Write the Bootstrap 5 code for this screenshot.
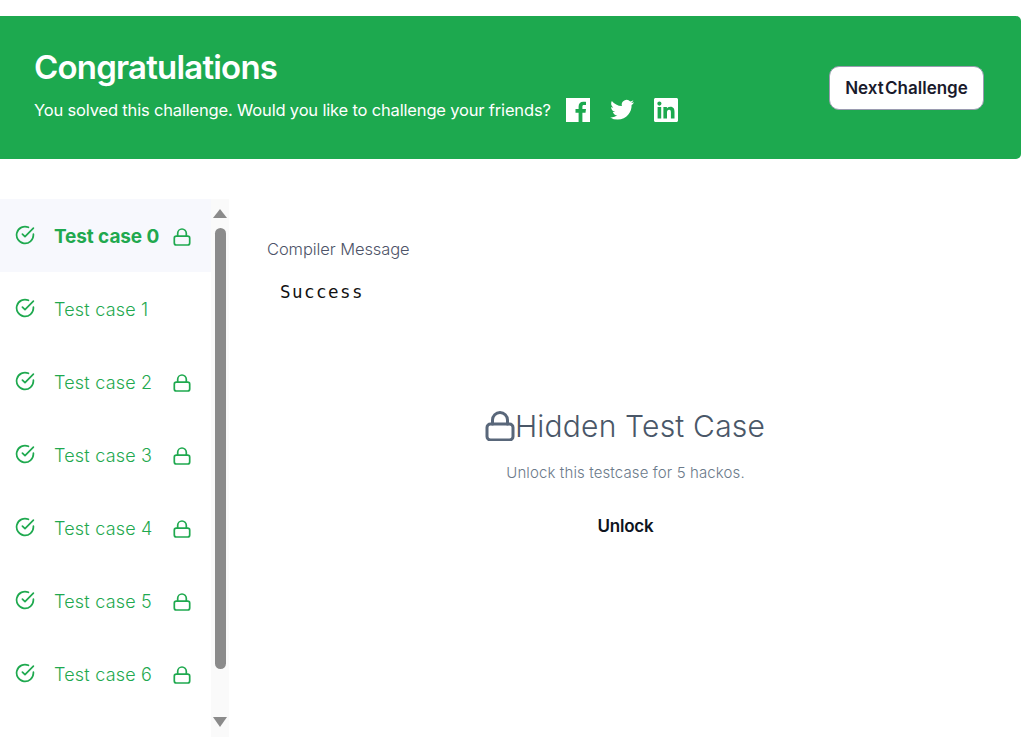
<!doctype html>
<html lang="en"><head><meta charset="utf-8"><title>Congratulations</title>
<link href="https://cdn.jsdelivr.net/npm/bootstrap@5.3.0/dist/css/bootstrap.min.css" rel="stylesheet">
<style>
html,body{height:750px;overflow:hidden;background:#fff}
body{font-family:Inter,"Liberation Sans",sans-serif;padding-top:16px}
.banner{width:1021px;height:143px;background:#1da94f;color:#fff;border-radius:0 5px 5px 0;padding:0 37px 0 34px}
.banner-copy{margin-bottom:6px}
.banner-title{font-size:33px;font-weight:600;letter-spacing:-.8px;line-height:40px;margin:0 0 11px}
.banner-text{font-size:16.5px;letter-spacing:-.17px;line-height:24px}
.socials{gap:16px;margin-left:15px}
.socials svg{display:block}
.next-btn{width:155px;height:44px;background:#fff;border:1px solid #9a9bb0;border-radius:10px;color:#191a2c;font-size:17px;font-weight:600;letter-spacing:0;padding:3px 0 0;word-spacing:-3px}
.next-btn:hover{background:#fff;color:#191a2c}
.lower{margin-top:40px;height:538px}
.side{width:229px}
.case-list{width:211px}
.case-row{height:73px;padding-left:15px;color:#1fa94f;font-size:18px;font-weight:300;letter-spacing:.2px}
.case-row.on{background:#f7f8fd;font-size:19px;font-weight:700;letter-spacing:-.1px}
.case-icon{margin-bottom:2px}
.case-label{margin-left:19px;padding-top:1px;white-space:nowrap}
.on .case-label{padding-top:3px}
.case-lock{margin-left:auto;margin-right:20px;margin-top:3px}
.track{width:18px;background:#fafafa;padding:10px 0 9px}
.arrow-up,.arrow-down{width:0;height:0;border-left:7px solid transparent;border-right:7px solid transparent}
.arrow-up{border-bottom:9px solid #8b8b8b}
.arrow-down{border-top:10px solid #8b8b8b}
.thumb{width:11px;height:441px;background:#8b8b8b;border-radius:6px;margin:10px 0 48px}
.main-pane{padding:38px 0 0 38px}
.msg-label{font-size:16.5px;font-weight:300;color:#4d5368;letter-spacing:-.09px;line-height:24px}
.msg-text{font-family:"DejaVu Sans Mono",monospace;font-size:17.5px;color:#111;margin:19px 0 0 13px;line-height:24px;letter-spacing:1.45px}
.hidden-box{width:717px;margin-top:98px}
.hidden-title{font-size:30px;font-weight:300;color:#4a5768;line-height:48px;margin:0;letter-spacing:.2px}
.hidden-title svg{margin-left:-1px}
.hidden-sub{font-size:15px;font-weight:300;color:#6b7a8a;margin:11px 0 0;line-height:24px;letter-spacing:.12px}
.unlock-btn{font-size:17px;font-weight:600;color:#0e141e;padding:0;border:0;margin-top:29px;line-height:24px;letter-spacing:-.2px}
</style></head><body>
<section class="banner d-flex align-items-center justify-content-between">
  <div class="banner-copy">
    <h1 class="banner-title">Congratulations</h1>
    <div class="d-flex align-items-center banner-text">
      <span>You solved this challenge. Would you like to challenge your friends?</span>
      <span class="d-flex socials">
        <svg width="24" height="24" viewBox="0 0 24 24" aria-label="Facebook"><path fill="#fff" d="M0 0h24v24h-7.6v-9.300h3.100l.5-3.600h-3.600V8.800c0-1 .3-1.700 1.800-1.700H20V3.900c-.3 0-1.500-.1-2.800-.1-2.800 0-4.600 1.700-4.600 4.700v2.600H9.500v3.600h3.100V24H0z"/></svg>
        <svg width="32" height="24" viewBox="0 0 32 24" aria-label="Twitter"><path fill="#fff" d="M28 4.200c-.9.400-1.800.7-2.800.8 1-.6 1.800-1.500 2.200-2.700-.9.600-2 1-3.100 1.200A4.900 4.900 0 0 0 15.900 8C11.800 7.800 8.200 5.900 5.800 2.900c-1.300 2.300-.6 5.200 1.500 6.600-.8 0-1.500-.2-2.200-.6 0 2.400 1.700 4.400 3.900 4.900-.7.200-1.500.2-2.200.1.600 2 2.400 3.400 4.600 3.400A9.900 9.900 0 0 1 4.200 19.400 14 14 0 0 0 11.700 21.600c9.100 0 14.200-7.700 13.900-14.500 1-.7 1.800-1.600 2.400-2.900z"/></svg>
        <svg width="24" height="24" viewBox="0 0 24 24" aria-label="LinkedIn"><path fill="#fff" fill-rule="evenodd" d="M1.500 0h21c.8 0 1.500.7 1.500 1.500v21c0 .8-.7 1.500-1.500 1.500h-21C.7 24 0 23.300 0 22.500v-21C0 .7.700 0 1.500 0zM3.600 9v11.400h3.600V9zM5.400 3.500a2.100 2.100 0 1 0 0 4.200 2.100 2.100 0 0 0 0-4.200zM9.400 9v11.400H13v-5.700c0-1.500.3-2.900 2.100-2.900 1.800 0 1.800 1.700 1.800 3v5.600h3.600v-6.300c0-3.100-.7-5.400-4.300-5.400-1.700 0-2.900.9-3.300 1.800V9z"/></svg>
      </span>
    </div>
  </div>
  <button class="btn next-btn" type="button">Next Challenge</button>
</section>
<div class="d-flex lower">
  <aside class="side d-flex">
    <div class="case-list">
      <div class="case-row on d-flex align-items-center"><svg class="case-icon" width="20" height="20" viewBox="0 0 20 20" fill="none" stroke="#1fa94f" stroke-width="1.700" stroke-linecap="round" stroke-linejoin="round"><path d="M18.400 9.200v.8a8.400 8.400 0 1 1-5-7.700"/><path d="M18.400 3.200 10 11.700 7.400 9.100"/></svg><span class="case-label">Test case 0</span><svg class="case-lock" width="18" height="18" viewBox="0 0 18 18" fill="none" stroke="#1fa94f" stroke-width="1.700" stroke-linecap="round" stroke-linejoin="round"><rect x="1.300" y="8.200" width="15.400" height="8.800" rx="2"/><path d="M4.700 8.200V5.300a4.300 4.300 0 0 1 8.600 0v2.900"/></svg></div>
      <div class="case-row d-flex align-items-center"><svg class="case-icon" width="20" height="20" viewBox="0 0 20 20" fill="none" stroke="#1fa94f" stroke-width="1.700" stroke-linecap="round" stroke-linejoin="round"><path d="M18.400 9.200v.8a8.400 8.400 0 1 1-5-7.700"/><path d="M18.400 3.200 10 11.700 7.400 9.100"/></svg><span class="case-label">Test case 1</span></div>
      <div class="case-row d-flex align-items-center"><svg class="case-icon" width="20" height="20" viewBox="0 0 20 20" fill="none" stroke="#1fa94f" stroke-width="1.700" stroke-linecap="round" stroke-linejoin="round"><path d="M18.400 9.200v.8a8.400 8.400 0 1 1-5-7.700"/><path d="M18.400 3.200 10 11.700 7.400 9.100"/></svg><span class="case-label">Test case 2</span><svg class="case-lock" width="18" height="18" viewBox="0 0 18 18" fill="none" stroke="#1fa94f" stroke-width="1.700" stroke-linecap="round" stroke-linejoin="round"><rect x="1.300" y="8.200" width="15.400" height="8.800" rx="2"/><path d="M4.700 8.200V5.300a4.300 4.300 0 0 1 8.600 0v2.900"/></svg></div>
      <div class="case-row d-flex align-items-center"><svg class="case-icon" width="20" height="20" viewBox="0 0 20 20" fill="none" stroke="#1fa94f" stroke-width="1.700" stroke-linecap="round" stroke-linejoin="round"><path d="M18.400 9.200v.8a8.400 8.400 0 1 1-5-7.700"/><path d="M18.400 3.200 10 11.700 7.400 9.100"/></svg><span class="case-label">Test case 3</span><svg class="case-lock" width="18" height="18" viewBox="0 0 18 18" fill="none" stroke="#1fa94f" stroke-width="1.700" stroke-linecap="round" stroke-linejoin="round"><rect x="1.300" y="8.200" width="15.400" height="8.800" rx="2"/><path d="M4.700 8.200V5.300a4.300 4.300 0 0 1 8.600 0v2.900"/></svg></div>
      <div class="case-row d-flex align-items-center"><svg class="case-icon" width="20" height="20" viewBox="0 0 20 20" fill="none" stroke="#1fa94f" stroke-width="1.700" stroke-linecap="round" stroke-linejoin="round"><path d="M18.400 9.200v.8a8.400 8.400 0 1 1-5-7.700"/><path d="M18.400 3.200 10 11.700 7.400 9.100"/></svg><span class="case-label">Test case 4</span><svg class="case-lock" width="18" height="18" viewBox="0 0 18 18" fill="none" stroke="#1fa94f" stroke-width="1.700" stroke-linecap="round" stroke-linejoin="round"><rect x="1.300" y="8.200" width="15.400" height="8.800" rx="2"/><path d="M4.700 8.200V5.300a4.300 4.300 0 0 1 8.600 0v2.900"/></svg></div>
      <div class="case-row d-flex align-items-center"><svg class="case-icon" width="20" height="20" viewBox="0 0 20 20" fill="none" stroke="#1fa94f" stroke-width="1.700" stroke-linecap="round" stroke-linejoin="round"><path d="M18.400 9.200v.8a8.400 8.400 0 1 1-5-7.700"/><path d="M18.400 3.200 10 11.700 7.400 9.100"/></svg><span class="case-label">Test case 5</span><svg class="case-lock" width="18" height="18" viewBox="0 0 18 18" fill="none" stroke="#1fa94f" stroke-width="1.700" stroke-linecap="round" stroke-linejoin="round"><rect x="1.300" y="8.200" width="15.400" height="8.800" rx="2"/><path d="M4.700 8.200V5.300a4.300 4.300 0 0 1 8.600 0v2.900"/></svg></div>
      <div class="case-row d-flex align-items-center"><svg class="case-icon" width="20" height="20" viewBox="0 0 20 20" fill="none" stroke="#1fa94f" stroke-width="1.700" stroke-linecap="round" stroke-linejoin="round"><path d="M18.400 9.200v.8a8.400 8.400 0 1 1-5-7.700"/><path d="M18.400 3.200 10 11.700 7.400 9.100"/></svg><span class="case-label">Test case 6</span><svg class="case-lock" width="18" height="18" viewBox="0 0 18 18" fill="none" stroke="#1fa94f" stroke-width="1.700" stroke-linecap="round" stroke-linejoin="round"><rect x="1.300" y="8.200" width="15.400" height="8.800" rx="2"/><path d="M4.700 8.200V5.300a4.300 4.300 0 0 1 8.600 0v2.900"/></svg></div>
    </div>
    <div class="track d-flex flex-column align-items-center"><div class="arrow-up"></div><div class="thumb"></div><div class="arrow-down"></div></div>
  </aside>
  <main class="main-pane flex-grow-1">
    <div class="msg-label">Compiler Message</div>
    <div class="msg-text">Success</div>
    <div class="hidden-box text-center">
      <h2 class="hidden-title d-flex align-items-center justify-content-center"><svg width="30" height="30" viewBox="0 0 30 30" fill="none" stroke="#59677a" stroke-width="3" stroke-linecap="round" stroke-linejoin="round"><rect x="2" y="13" width="26" height="16" rx="3.500"/><path d="M7.500 13V9a7.500 7.500 0 0 1 15 0v4"/></svg><span>Hidden Test Case</span></h2>
      <p class="hidden-sub">Unlock this testcase for 5 hackos.</p>
      <button class="btn unlock-btn" type="button">Unlock</button>
    </div>
  </main>
</div>
<script src="https://cdn.jsdelivr.net/npm/bootstrap@5.3.0/dist/js/bootstrap.bundle.min.js"></script>
</body></html>
